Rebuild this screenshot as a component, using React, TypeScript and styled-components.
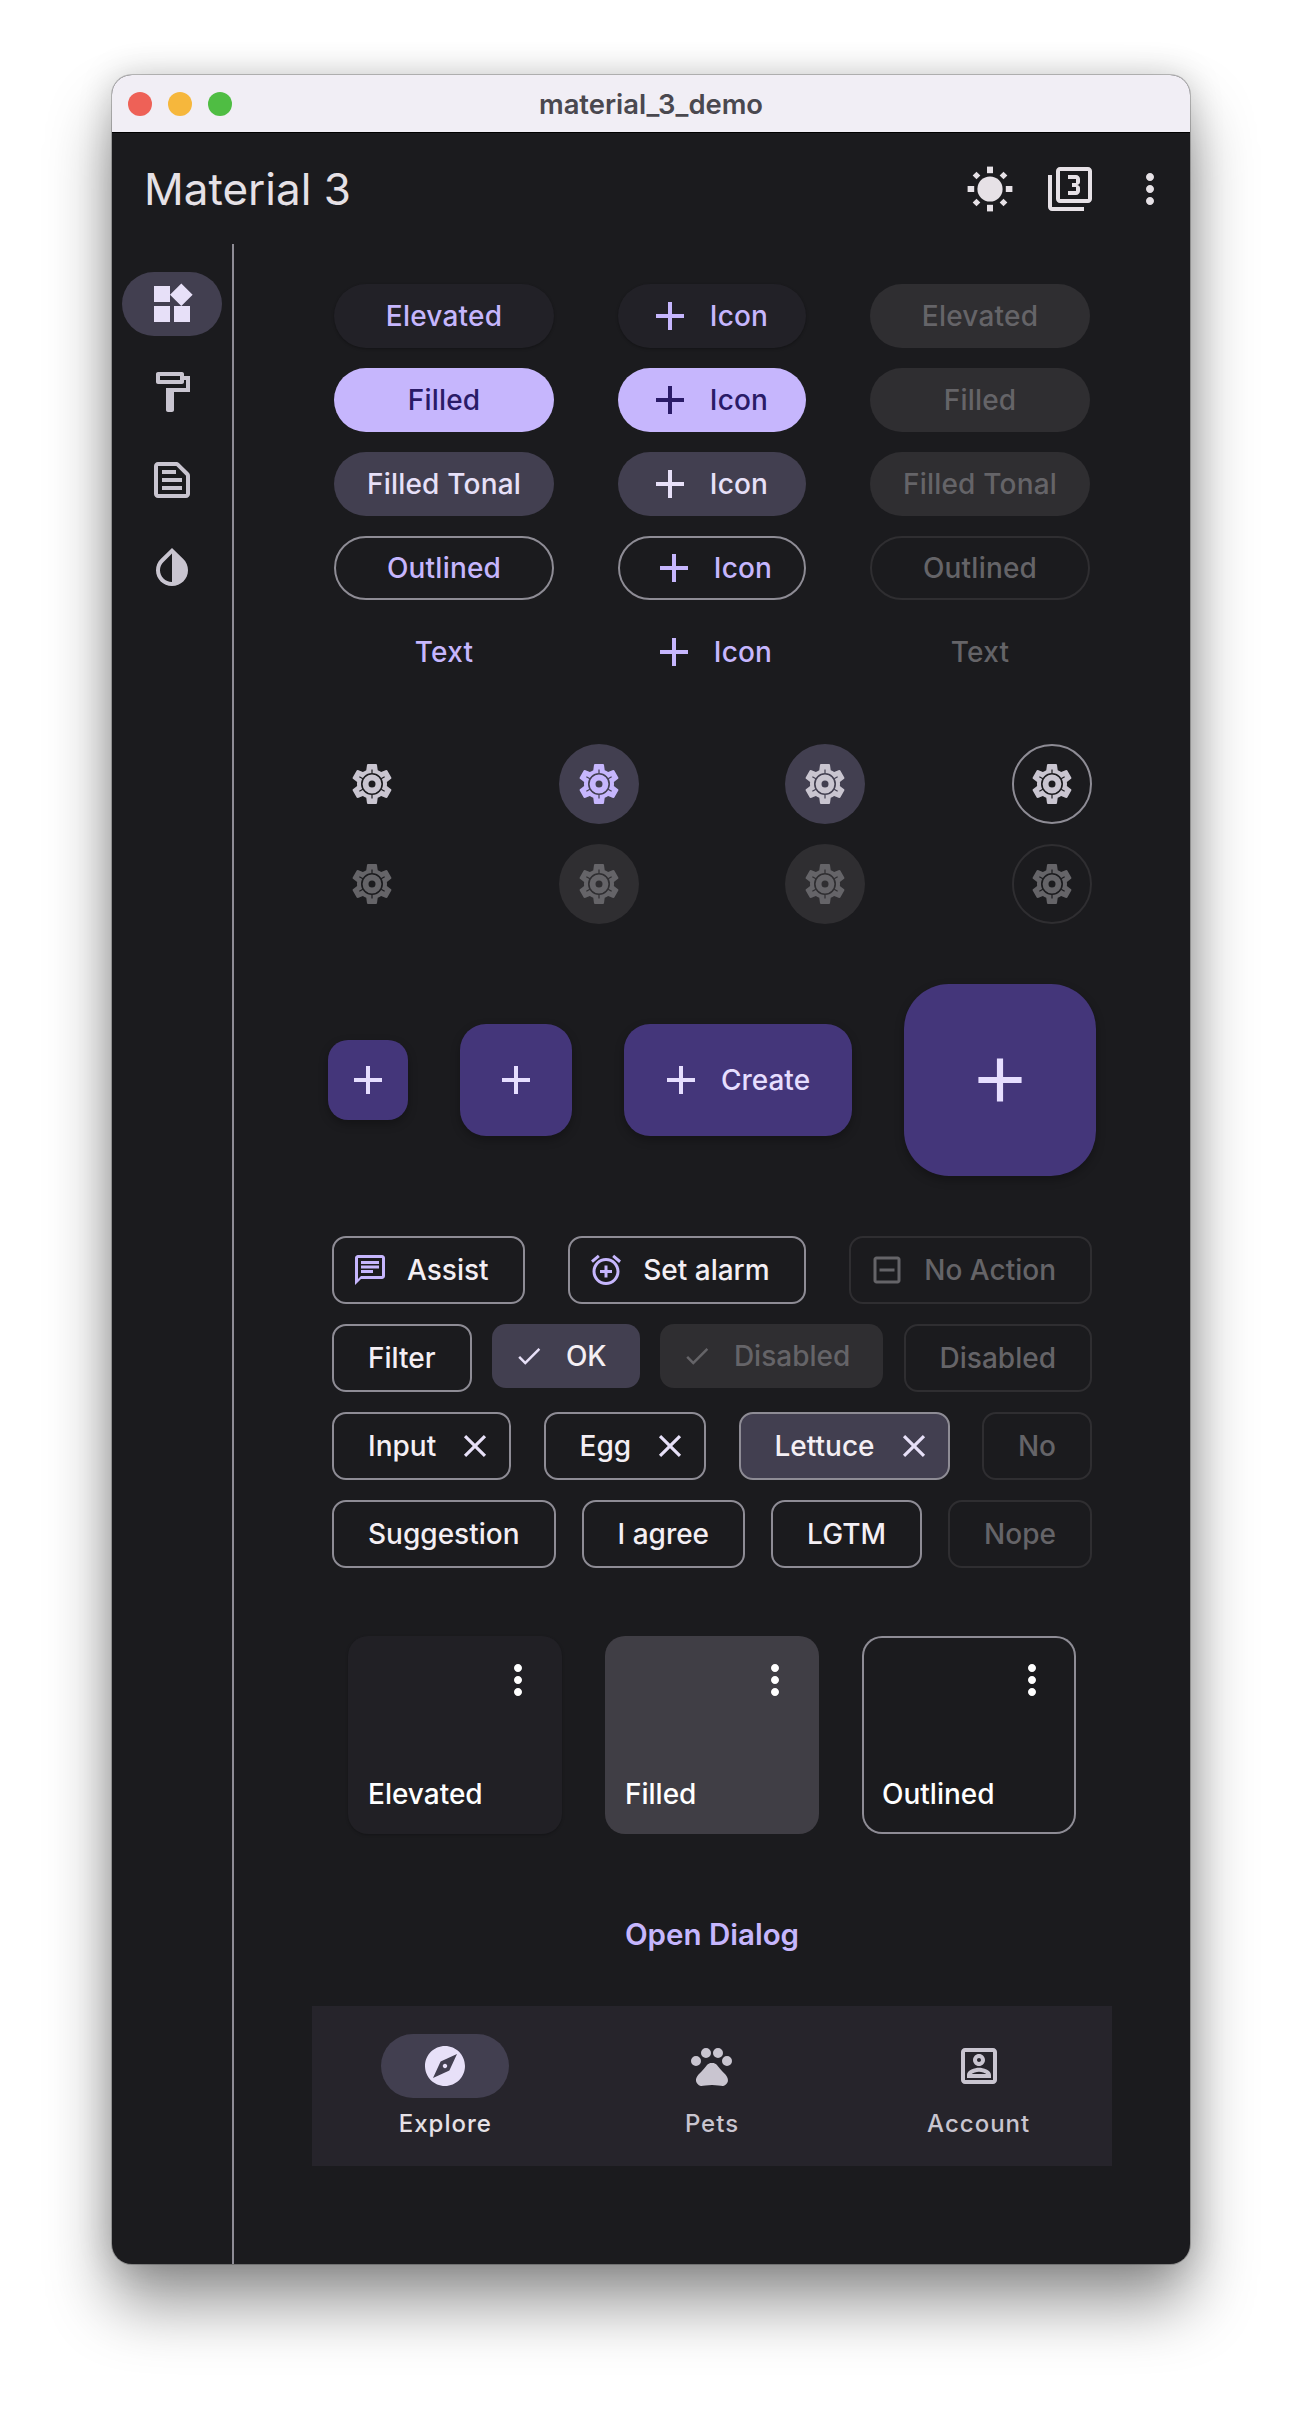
import * as React from "react";
import styled, { createGlobalStyle, css } from "styled-components";

const BACKGROUND = "#1b1b1e";
const PRIMARY = "#c6b6fd";
const ON_SURFACE = "#e6e1e6";
const OUTLINE = "#8e8c95";
const DISABLED_BG = "#2f2e31";
const DISABLED_FG = "#656468";
const TONAL = "#423f50";

const GEAR_OUTER =
	"M19.43 12.98c.04-.32.07-.64.07-.98 0-.34-.03-.66-.07-.98l2.11-1.65c.19-.15.24-.42.12-.64l-2-3.46c-.09-.16-.26-.25-.44-.25-.06 0-.12.01-.17.03l-2.49 1c-.52-.4-1.08-.73-1.69-.98l-.38-2.65C14.46 2.18 14.25 2 14 2h-4c-.25 0-.46.18-.49.42l-.38 2.65c-.61.25-1.17.59-1.69.98l-2.49-1c-.06-.02-.12-.03-.18-.03-.17 0-.34.09-.43.25l-2 3.46c-.13.22-.07.49.12.64l2.11 1.65c-.04.32-.07.65-.07.98 0 .33.03.66.07.98l-2.11 1.65c-.19.15-.24.42-.12.64l2 3.46c.09.16.26.25.44.25.06 0 .12-.01.17-.03l2.49-1c.52.4 1.08.73 1.69.98l.38 2.65c.03.24.24.42.49.42h4c.25 0 .46-.18.49-.42l.38-2.65c.61-.25 1.17-.59 1.69-.98l2.49 1c.06.02.12.03.18.03.17 0 .34-.09.43-.25l2-3.46c.12-.22.07-.49-.12-.64l-2.11-1.65z";

const circlePath = (r: number) => `M${12 - r} 12a${r} ${r} 0 1 0 ${2 * r} 0a${r} ${r} 0 1 0 ${-2 * r} 0z`;

// short slits running out from the ring towards each tooth
const gearTick = (deg: number) => {
	const a = (deg * Math.PI) / 180;
	const ux = Math.cos(a);
	const uy = Math.sin(a);
	const point = (r: number, side: number) =>
		`${(12 + ux * r - uy * side).toFixed(2)} ${(12 + uy * r + ux * side).toFixed(2)}`;
	return `M${point(5.5, -0.3)}L${point(7.3, -0.3)}L${point(7.3, 0.3)}L${point(5.5, 0.3)}z`;
};

const GEAR = [
	GEAR_OUTER,
	circlePath(5.5),
	circlePath(4.7),
	circlePath(1.75),
	...[30, 90, 150, 210, 270, 330].map(gearTick),
].join("");

const ICONS = {
	add: "M19 13h-6v6h-2v-6H5v-2h6V5h2v6h6v2z",
	widgets: "M13 13v8h8v-8h-8zM3 21h8v-8H3v8zM3 3v8h8V3H3zm13.66-1.31L11 7.34 16.66 13l5.66-5.66-5.66-5.65z",
	paint: "M18 4V3c0-.55-.45-1-1-1H5c-.55 0-1 .45-1 1v4c0 .55.45 1 1 1h12c.55 0 1-.45 1-1V6h1v4H9v11c0 .55.45 1 1 1h2c.55 0 1-.45 1-1v-9h8V4h-3zm-2 2H6V4h10v2z",
	snippet: "M14.17 5 19 9.83V19H5V5h9.17m0-2H5c-1.1 0-2 .9-2 2v14c0 1.1.9 2 2 2h14c1.1 0 2-.9 2-2V9.83c0-.53-.21-1.04-.59-1.41l-4.83-4.83C15.21 3.21 14.7 3 14.17 3zM7 15h10v2H7v-2zm0-4h10v2H7v-2zm0-4h7v2H7V7z",
	invert: "M12 4.81V19c-3.31 0-6-2.63-6-5.87 0-1.56.62-3.03 1.75-4.14L12 4.81M6.35 7.56C4.9 8.99 4 10.96 4 13.13 4 17.48 7.58 21 12 21c4.42 0 8-3.52 8-7.87 0-2.17-.9-4.14-2.35-5.57L12 2 6.35 7.56z",
	filter3: "M21 1H7c-1.1 0-2 .9-2 2v14c0 1.1.9 2 2 2h14c1.1 0 2-.9 2-2V3c0-1.1-.9-2-2-2zm0 16H7V3h14v14zM3 5H1v16c0 1.1.9 2 2 2h16v-2H3V5zm14 8v-1.5c0-.83-.67-1.5-1.5-1.5.83 0 1.5-.67 1.5-1.5V7c0-1.11-.9-2-2-2h-4v2h4v2h-2v2h2v2h-4v2h4c1.1 0 2-.89 2-2z",
	more: "M12 8c1.1 0 2-.9 2-2s-.9-2-2-2-2 .9-2 2 .9 2 2 2zm0 2c-1.1 0-2 .9-2 2s.9 2 2 2 2-.9 2-2-.9-2-2-2zm0 6c-1.1 0-2 .9-2 2s.9 2 2 2 2-.9 2-2-.9-2-2-2z",
	settings: GEAR,
	chat: "M20 2H4c-1.1 0-2 .9-2 2v18l4-4h14c1.1 0 2-.9 2-2V4c0-1.1-.9-2-2-2zm0 14H6l-2 2V4h16v12zM6 12h8v2H6zM6 9h12v2H6zM6 6h12v2H6z",
	alarm: "M7.88 3.39 6.6 1.86 2 5.71l1.29 1.53 4.59-3.85zM22 5.72l-4.6-3.86-1.29 1.53 4.6 3.86L22 5.72zM12 4c-4.97 0-9 4.03-9 9s4.03 9 9 9 9-4.03 9-9-4.03-9-9-9zm0 16c-3.87 0-7-3.13-7-7s3.13-7 7-7 7 3.13 7 7-3.13 7-7 7zm1-11h-2v3H8v2h3v3h2v-3h3v-2h-3V9z",
	minusBox: "M7 11h10v2H7zM19 3H5c-1.1 0-2 .9-2 2v14c0 1.1.9 2 2 2h14c1.1 0 2-.9 2-2V5c0-1.1-.9-2-2-2zm0 16H5V5h14v14z",
	check: "M9 16.17 4.83 12l-1.42 1.41L9 19 21 7l-1.41-1.41z",
	close: "M19 6.41 17.59 5 12 10.59 6.41 5 5 6.41 10.59 12 5 17.59 6.41 19 12 13.41 17.59 19 19 17.59 13.41 12z",
	explore: "M12 10.9c-.61 0-1.1.49-1.1 1.1s.49 1.1 1.1 1.1c.61 0 1.1-.49 1.1-1.1s-.49-1.1-1.1-1.1zM12 2C6.48 2 2 6.48 2 12s4.48 10 10 10 10-4.48 10-10S17.52 2 12 2zm2.19 12.19L6 18l3.81-8.19L18 6l-3.81 8.19z",
	pets: "M6.5 9.5a2.5 2.5 0 1 1-5 0 2.5 2.5 0 0 1 5 0zM11.5 5.5a2.5 2.5 0 1 1-5 0 2.5 2.5 0 0 1 5 0zM17.5 5.5a2.5 2.5 0 1 1-5 0 2.5 2.5 0 0 1 5 0zM22 9.5a2.5 2.5 0 1 1-5 0 2.5 2.5 0 0 1 5 0zM17.34 14.86c-.87-1.02-1.6-1.89-2.48-2.91-.46-.54-1.05-1.08-1.75-1.32-.11-.04-.22-.07-.33-.09-.25-.04-.52-.04-.78-.04s-.53 0-.79.05c-.11.02-.22.05-.33.09-.7.24-1.28.78-1.75 1.32-.87 1.02-1.6 1.89-2.48 2.91-1.31 1.31-2.92 2.76-2.62 4.79.29 1.02 1.02 2.03 2.33 2.32.73.15 3.06-.44 5.54-.44h.18c2.48 0 4.81.58 5.54.44 1.31-.29 2.04-1.31 2.33-2.32.31-2.04-1.3-3.49-2.61-4.8z",
	account: "M19 5v14H5V5h14m0-2H5c-1.1 0-2 .9-2 2v14c0 1.1.9 2 2 2h14c1.1 0 2-.9 2-2V5c0-1.1-.9-2-2-2zm-7 9c-1.65 0-3-1.35-3-3s1.35-3 3-3 3 1.35 3 3-1.35 3-3 3zm0-4c-.55 0-1 .45-1 1s.45 1 1 1 1-.45 1-1-.45-1-1-1zm6 10H6v-1.53c0-2.5 3.97-3.58 6-3.58s6 1.08 6 3.58V18zm-9.69-2h7.38c-.69-.56-2.38-1.12-3.69-1.12s-3.01.56-3.69 1.12z",
};

type IconName = keyof typeof ICONS;

const Svg = styled.svg<{ $size: number }>`
	width: ${({ $size }) => $size}px;
	height: ${({ $size }) => $size}px;
	flex: none;
	display: block;
	fill: currentColor;
`;

const Icon = ({ name, size = 48 }: { name: IconName; size?: number }) => (
	<Svg $size={size} viewBox="0 0 24 24">
		<path fillRule={name === "settings" || name === "filter3" ? "evenodd" : undefined} d={ICONS[name]} />
	</Svg>
);

const Sun = () => (
	<Svg $size={48} viewBox="0 0 48 48">
		<circle cx="24" cy="24" r="12.6" />
		<rect x="21" y="1.6" width="6" height="6.6" />
		<rect x="21" y="39.8" width="6" height="6.6" />
		<rect x="1.6" y="21" width="6.6" height="6" />
		<rect x="39.8" y="21" width="6.6" height="6" />
		<rect x="7.8" y="7.8" width="5.4" height="5.4" transform="rotate(45 10.5 10.5)" />
		<rect x="34.8" y="7.8" width="5.4" height="5.4" transform="rotate(45 37.5 10.5)" />
		<rect x="7.8" y="34.8" width="5.4" height="5.4" transform="rotate(45 10.5 37.5)" />
		<rect x="34.8" y="34.8" width="5.4" height="5.4" transform="rotate(45 37.5 37.5)" />
	</Svg>
);

const GlobalStyle = createGlobalStyle`
	html, body {
		margin: 0;
		background: #fff;
		font-family: Inter, "Liberation Sans", sans-serif;
	}
	button {
		font-family: inherit;
	}
`;

const Page = styled.div`
	width: 1302px;
	height: 2412px;
	padding: 75px 112px 0;
	box-sizing: border-box;
	overflow: hidden;
`;

const Window = styled.div`
	width: 1078px;
	height: 2189px;
	display: flex;
	flex-direction: column;
	border-radius: 20px;
	overflow: hidden;
	background: ${BACKGROUND};
	box-shadow: 0 0 0 1px rgba(0, 0, 0, 0.22), 0 40px 64px rgba(0, 0, 0, 0.42), 0 0 34px rgba(0, 0, 0, 0.18);
`;

const TitleBar = styled.div`
	position: relative;
	height: 57px;
	flex: none;
	display: flex;
	align-items: center;
	justify-content: center;
	background: #f1eef5;
	border-bottom: 1px solid #000;
	color: #4a484f;
	font-size: 27.4px;
	font-weight: 600;
`;

const Lights = styled.div`
	position: absolute;
	left: 16px;
	top: 17px;
	display: flex;
	gap: 16px;
`;

const Light = styled.span<{ $color: string }>`
	width: 24px;
	height: 24px;
	border-radius: 50%;
	background: ${({ $color }) => $color};
`;

const AppBar = styled.header`
	height: 111px;
	flex: none;
	display: flex;
	align-items: center;
	justify-content: space-between;
	padding: 0 16px 0 32px;
	color: ${ON_SURFACE};
`;

const AppTitle = styled.div`
	font-size: 44px;
	font-weight: 400;
`;

const Actions = styled.div`
	display: flex;
	gap: 32px;
`;

const Body = styled.div`
	flex: 1;
	display: flex;
	min-height: 0;
`;

const Rail = styled.nav`
	width: 122px;
	flex: none;
	box-sizing: border-box;
	padding: 28px 0 0 10px;
	border-right: 2px solid ${OUTLINE};
	display: flex;
	flex-direction: column;
	gap: 24px;
`;

const RailItem = styled.div<{ $selected?: boolean }>`
	width: 100px;
	height: 64px;
	border-radius: 32px;
	display: flex;
	align-items: center;
	justify-content: center;
	background: ${({ $selected }) => ($selected ? TONAL : "transparent")};
	color: ${({ $selected }) => ($selected ? "#e7e0f8" : "#c9c5d0")};
`;

const Main = styled.main`
	flex: 1;
	display: flex;
	flex-direction: column;
	align-items: center;
	padding-top: 40px;
`;

const ButtonGrid = styled.div`
	width: 756px;
	display: flex;
	justify-content: space-between;
`;

const ButtonColumn = styled.div`
	display: flex;
	flex-direction: column;
	gap: 20px;
`;

type Variant = "elevated" | "filled" | "tonal" | "outlined" | "text";

const variantStyles: Record<Variant, ReturnType<typeof css>> = {
	elevated: css`
		background: #222127;
		color: ${PRIMARY};
		box-shadow: 0 1px 3px rgba(0, 0, 0, 0.3);
	`,
	filled: css`
		background: ${PRIMARY};
		color: #2a1b67;
	`,
	tonal: css`
		background: ${TONAL};
		color: #e7e0f8;
	`,
	outlined: css`
		background: transparent;
		color: ${PRIMARY};
		border-color: ${OUTLINE};
	`,
	text: css`
		background: transparent;
		color: ${PRIMARY};
	`,
};

const disabledStyles: Record<Variant, ReturnType<typeof css>> = {
	elevated: css`
		background: ${DISABLED_BG};
	`,
	filled: css`
		background: ${DISABLED_BG};
	`,
	tonal: css`
		background: ${DISABLED_BG};
	`,
	outlined: css`
		border-color: ${DISABLED_BG};
	`,
	text: css``,
};

const Pill = styled.button<{ $variant: Variant; $off?: boolean; $width: number }>`
	width: ${({ $width }) => $width}px;
	height: 64px;
	box-sizing: border-box;
	border: 2px solid transparent;
	border-radius: 32px;
	padding: 0;
	display: flex;
	align-items: center;
	justify-content: center;
	font-size: 28px;
	font-weight: 500;
	letter-spacing: 0.2px;
	${({ $variant }) => variantStyles[$variant]}
	${({ $variant, $off }) =>
		$off &&
		css`
			background: transparent;
			color: ${DISABLED_FG};
			box-shadow: none;
			${disabledStyles[$variant]}
		`}
`;

// the icon variants sit off-centre: less space before the icon than after the label
const IconPill = styled(Pill)`
	gap: 16px;
	padding-right: ${({ $variant }) => ($variant === "outlined" || $variant === "text" ? 2 : 10)}px;
`;

const GearGrid = styled.div`
	width: 760px;
	margin-top: 60px;
	display: grid;
	grid-template-columns: repeat(4, 80px);
	justify-content: space-between;
	row-gap: 20px;
`;

type GearKind = "standard" | "filled" | "tonal" | "outlined";

const GearButton = styled.div<{ $kind: GearKind; $off?: boolean }>`
	width: 80px;
	height: 80px;
	box-sizing: border-box;
	border-radius: 50%;
	display: flex;
	align-items: center;
	justify-content: center;
	color: ${({ $kind, $off }) => ($off ? DISABLED_FG : $kind === "filled" ? PRIMARY : "#c9c5d0")};
	background: ${({ $kind, $off }) =>
		$kind === "filled" || $kind === "tonal" ? ($off ? DISABLED_BG : TONAL) : "transparent"};
	border: 2px solid
		${({ $kind, $off }) => ($kind === "outlined" ? ($off ? DISABLED_BG : OUTLINE) : "transparent")};
`;

const FabRow = styled.div`
	margin-top: 60px;
	display: flex;
	align-items: center;
	gap: 52px;
`;

const Fab = styled.div<{ $w: number; $h: number; $radius: number }>`
	width: ${({ $w }) => $w}px;
	height: ${({ $h }) => $h}px;
	box-sizing: border-box;
	border-radius: ${({ $radius }) => $radius}px;
	background: #44367a;
	color: #e6deff;
	display: flex;
	align-items: center;
	justify-content: center;
	font-size: 28px;
	font-weight: 500;
	box-shadow: 0 4px 10px rgba(0, 0, 0, 0.28);
`;

const ExtendedFab = styled(Fab)`
	gap: 16px;
	padding-right: 9px;
`;

const ChipBlock = styled.div`
	width: 760px;
	margin-top: 60px;
	display: flex;
	flex-direction: column;
	gap: 20px;
`;

const ChipRow = styled.div`
	height: 68px;
	display: flex;
	justify-content: space-between;
	align-items: flex-start;
`;

const Chip = styled.div<{ $selected?: boolean; $off?: boolean; $flat?: boolean }>`
	height: ${({ $flat }) => ($flat ? 64 : 68)}px;
	box-sizing: border-box;
	border-radius: 14px;
	display: flex;
	align-items: center;
	padding: 0 34px;
	font-size: 28px;
	font-weight: 500;
	color: ${({ $off }) => ($off ? DISABLED_FG : "#f4eff4")};
	border: 2px solid ${({ $off }) => ($off ? DISABLED_BG : OUTLINE)};
	background: ${({ $selected }) => ($selected ? TONAL : "transparent")};
	${({ $flat, $off }) =>
		$flat &&
		css`
			border: none;
			padding: 0 33px 0 22px;
			gap: 22px;
			background: ${$off ? DISABLED_BG : TONAL};
		`}
`;

const AssistChip = styled(Chip)`
	padding: 0 34px 0 18px;
	gap: 19px;
`;

const InputChip = styled(Chip)`
	padding: 0 15px 0 34px;
	gap: 20px;
`;

const ChipIcon = styled.span<{ $off?: boolean; $tint?: boolean }>`
	display: flex;
	color: ${({ $off, $tint }) => ($off ? DISABLED_FG : $tint ? PRIMARY : "#e7e0f8")};
`;

const CardRow = styled.div`
	margin-top: 68px;
	display: flex;
	gap: 43px;
`;

const Card = styled.div<{ $kind: "elevated" | "filled" | "outlined" }>`
	width: 214px;
	height: 198px;
	box-sizing: border-box;
	border-radius: 20px;
	display: flex;
	flex-direction: column;
	justify-content: space-between;
	padding: 20px 20px 23px 20px;
	color: #fff;
	font-size: 28px;
	font-weight: 500;
	background: ${({ $kind }) => ($kind === "elevated" ? "#212025" : $kind === "filled" ? "#403e45" : "transparent")};
	box-shadow: ${({ $kind }) =>
		$kind === "outlined"
			? `inset 0 0 0 2px ${OUTLINE}`
			: $kind === "elevated"
				? "0 1px 3px rgba(0,0,0,.25)"
				: "none"};
`;

const CardMenu = styled.div`
	align-self: flex-end;
`;

const OpenDialog = styled.button`
	margin-top: 68px;
	height: 64px;
	padding: 0;
	border: none;
	background: transparent;
	color: ${PRIMARY};
	font-size: 29.5px;
	font-weight: 600;
`;

const NavBar = styled.div`
	width: 800px;
	height: 160px;
	margin-top: 40px;
	display: grid;
	grid-template-columns: repeat(3, 1fr);
	background: #26242b;
`;

const NavItem = styled.div<{ $selected?: boolean }>`
	display: flex;
	flex-direction: column;
	align-items: center;
	padding-top: 28px;
	color: ${({ $selected }) => ($selected ? "#e6e1e6" : "#c9c5d0")};
`;

const NavIndicator = styled.div<{ $selected?: boolean }>`
	width: 128px;
	height: 64px;
	border-radius: 32px;
	display: flex;
	align-items: center;
	justify-content: center;
	background: ${({ $selected }) => ($selected ? TONAL : "transparent")};
	color: ${({ $selected }) => ($selected ? "#e7e0f8" : "#c9c5d0")};
`;

const NavLabel = styled.div`
	margin-top: 12px;
	font-size: 24px;
	line-height: 28px;
	font-weight: 500;
	letter-spacing: 1px;
`;

const buttonRows: { variant: Variant; label: string }[] = [
	{ variant: "elevated", label: "Elevated" },
	{ variant: "filled", label: "Filled" },
	{ variant: "tonal", label: "Filled Tonal" },
	{ variant: "outlined", label: "Outlined" },
	{ variant: "text", label: "Text" },
];

const gearKinds: GearKind[] = ["standard", "filled", "tonal", "outlined"];

export default function App() {
	return (
		<Page>
			<GlobalStyle />
			<Window>
				<TitleBar>
					<Lights>
						<Light $color="#ee6157" />
						<Light $color="#f6b73c" />
						<Light $color="#4fbd43" />
					</Lights>
					material_3_demo
				</TitleBar>
				<AppBar>
					<AppTitle>Material 3</AppTitle>
					<Actions>
						<Sun />
						<Icon name="filter3" />
						<Icon name="more" />
					</Actions>
				</AppBar>
				<Body>
					<Rail>
						<RailItem $selected>
							<Icon name="widgets" />
						</RailItem>
						<RailItem>
							<Icon name="paint" />
						</RailItem>
						<RailItem>
							<Icon name="snippet" />
						</RailItem>
						<RailItem>
							<Icon name="invert" />
						</RailItem>
					</Rail>
					<Main>
						<ButtonGrid>
							<ButtonColumn>
								{buttonRows.map(b => (
									<Pill key={b.label} $variant={b.variant} $width={220}>
										{b.label}
									</Pill>
								))}
							</ButtonColumn>
							<ButtonColumn>
								{buttonRows.map(b => (
									<IconPill key={b.label} $variant={b.variant} $width={188}>
										<Icon name="add" />
										Icon
									</IconPill>
								))}
							</ButtonColumn>
							<ButtonColumn>
								{buttonRows.map(b => (
									<Pill key={b.label} $variant={b.variant} $width={220} $off>
										{b.label}
									</Pill>
								))}
							</ButtonColumn>
						</ButtonGrid>
						<GearGrid>
							{gearKinds.map(k => (
								<GearButton key={k} $kind={k}>
									<Icon name="settings" />
								</GearButton>
							))}
							{gearKinds.map(k => (
								<GearButton key={k} $kind={k} $off>
									<Icon name="settings" />
								</GearButton>
							))}
						</GearGrid>
						<FabRow>
							<Fab $w={80} $h={80} $radius={20}>
								<Icon name="add" />
							</Fab>
							<Fab $w={112} $h={112} $radius={26}>
								<Icon name="add" />
							</Fab>
							<ExtendedFab $w={228} $h={112} $radius={26}>
								<Icon name="add" />
								Create
							</ExtendedFab>
							<Fab $w={192} $h={192} $radius={45}>
								<Icon name="add" size={74} />
							</Fab>
						</FabRow>
						<ChipBlock>
							<ChipRow>
								<AssistChip>
									<ChipIcon $tint>
										<Icon name="chat" size={36} />
									</ChipIcon>
									Assist
								</AssistChip>
								<AssistChip>
									<ChipIcon $tint>
										<Icon name="alarm" size={36} />
									</ChipIcon>
									Set alarm
								</AssistChip>
								<AssistChip $off>
									<ChipIcon $off>
										<Icon name="minusBox" size={36} />
									</ChipIcon>
									No Action
								</AssistChip>
							</ChipRow>
							<ChipRow>
								<Chip>Filter</Chip>
								<Chip $flat $selected>
									<ChipIcon>
										<Icon name="check" size={30} />
									</ChipIcon>
									OK
								</Chip>
								<Chip $flat $off>
									<ChipIcon $off>
										<Icon name="check" size={30} />
									</ChipIcon>
									Disabled
								</Chip>
								<Chip $off>Disabled</Chip>
							</ChipRow>
							<ChipRow>
								<InputChip>
									Input
									<ChipIcon>
										<Icon name="close" size={38} />
									</ChipIcon>
								</InputChip>
								<InputChip>
									Egg
									<ChipIcon>
										<Icon name="close" size={38} />
									</ChipIcon>
								</InputChip>
								<InputChip $selected>
									Lettuce
									<ChipIcon>
										<Icon name="close" size={38} />
									</ChipIcon>
								</InputChip>
								<Chip $off>No</Chip>
							</ChipRow>
							<ChipRow>
								<Chip>Suggestion</Chip>
								<Chip>I agree</Chip>
								<Chip>LGTM</Chip>
								<Chip $off>Nope</Chip>
							</ChipRow>
						</ChipBlock>
						<CardRow>
							<Card $kind="elevated">
								<CardMenu>
									<Icon name="more" />
								</CardMenu>
								Elevated
							</Card>
							<Card $kind="filled">
								<CardMenu>
									<Icon name="more" />
								</CardMenu>
								Filled
							</Card>
							<Card $kind="outlined">
								<CardMenu>
									<Icon name="more" />
								</CardMenu>
								Outlined
							</Card>
						</CardRow>
						<OpenDialog>Open Dialog</OpenDialog>
						<NavBar>
							<NavItem $selected>
								<NavIndicator $selected>
									<Icon name="explore" />
								</NavIndicator>
								<NavLabel>Explore</NavLabel>
							</NavItem>
							<NavItem>
								<NavIndicator>
									<Icon name="pets" />
								</NavIndicator>
								<NavLabel>Pets</NavLabel>
							</NavItem>
							<NavItem>
								<NavIndicator>
									<Icon name="account" />
								</NavIndicator>
								<NavLabel>Account</NavLabel>
							</NavItem>
						</NavBar>
					</Main>
				</Body>
			</Window>
		</Page>
	);
}
